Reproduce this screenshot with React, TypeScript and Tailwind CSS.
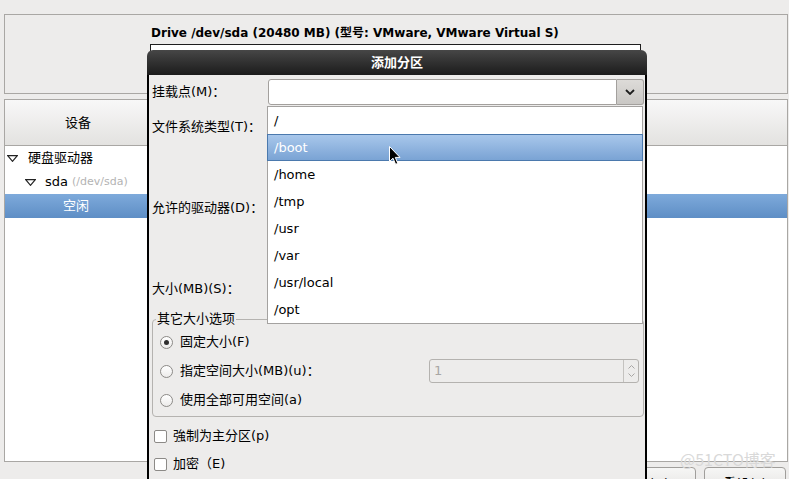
import React from "react";

function Tri() {
  return (
    <svg width="11" height="7" viewBox="0 0 11 7" className="shrink-0">
      <path d="M0.7 0.7 L10.3 0.7 L5.5 6.3 Z" fill="none" stroke="#222" strokeWidth="1.2" strokeLinejoin="miter" />
    </svg>
  );
}

function Radio({ checked }: { checked?: boolean }) {
  return (
    <div className="w-[13px] h-[13px] shrink-0 rounded-full border border-[#8c8a87] bg-gradient-to-b from-[#ffffff] to-[#ecebea] flex items-center justify-center">
      {checked ? <div className="w-[5px] h-[5px] rounded-full bg-[#2e2e2e]" /> : null}
    </div>
  );
}

function Check() {
  return <div className="w-[13px] h-[13px] shrink-0 rounded-[2px] border border-[#8c8a87] bg-white" />;
}

export default function App() {
  const items = ["/", "/boot", "/home", "/tmp", "/usr", "/var", "/usr/local", "/opt"];
  return (
    <div className="relative w-[789px] h-[479px] overflow-hidden bg-[#edeceb] text-[13px] leading-[16px] text-black font-['DejaVu_Sans','Noto_Sans_CJK_SC',sans-serif]">
      <div className="flex flex-col pt-[14px] pl-[4px] pr-[1px]">
        {/* top drive panel */}
        <div className="h-[80px] border border-[#a9a7a4] pl-[145px] pt-[10px] overflow-hidden">
          <div className="font-bold text-[12px] leading-[16px] whitespace-nowrap pl-[1px]">
            Drive /dev/sda (20480 MB) (型号: VMware, VMware Virtual S)
          </div>
          <div className="mt-[3px] w-[491px] h-[40px] bg-white border border-[#1e1e1e]" />
        </div>

        {/* device tree panel */}
        <div className="mt-[5px] h-[363px] border border-[#a9a7a4] bg-white flex flex-col">
          <div className="h-[46px] shrink-0 border-b border-[#a9a7a4] bg-gradient-to-b from-[#f8f8f8] to-[#e3e2e0] flex">
            <div className="w-[146px] flex items-center justify-center">设备</div>
          </div>
          <div className="h-[24px] flex items-center pl-[2px]">
            <Tri />
            <span className="ml-[10px]">硬盘驱动器</span>
          </div>
          <div className="h-[24px] flex items-center pl-[20px]">
            <Tri />
            <span className="ml-[9px]">sda</span>
            <span className="ml-[4px] text-[11px] text-[#b3b3b3]">(/dev/sda)</span>
          </div>
          <div className="h-[24px] flex items-center pl-[58px] text-white bg-gradient-to-b from-[#7eaadb] to-[#5e8ec5]">
            空闲
          </div>
        </div>

        {/* bottom buttons */}
        <div className="mt-[5px] flex justify-end gap-[8px] pr-[2px]">
          <div className="w-[110px] h-[30px] rounded-[4px] border border-[#a09e9b] bg-gradient-to-b from-[#f6f6f5] to-[#e2e0de] flex justify-center pt-[8px] pl-[10px]">
            删除(D)
          </div>
          <div className="w-[82px] h-[30px] rounded-[4px] border border-[#a09e9b] bg-gradient-to-b from-[#f6f6f5] to-[#e2e0de] flex justify-center pt-[8px]">
            重设(s)
          </div>
        </div>
      </div>

      {/* watermark */}
      <div className="absolute left-[680px] top-[449px] text-[16px] leading-[20px] text-[#d9d9d9] font-['Noto_Sans_CJK_SC',sans-serif]">
        @51CTO博客
      </div>

      {/* dialog */}
      <div className="absolute left-[147px] top-[50px] w-[500px] h-[440px] flex flex-col rounded-t-[6px] overflow-hidden">
        <div className="h-[25px] shrink-0 bg-gradient-to-b from-[#474747] to-[#1c1c1c] text-white font-bold flex items-center justify-center">
          添加分区
        </div>
        <div className="flex-1 bg-[#edeceb] border-x-2 border-black pl-[3px] pr-[1px] flex flex-col">
          <div className="mt-[4px] h-[26px] flex">
            <div className="w-[116px] flex items-center">挂载点(M)：</div>
            <div className="flex-1 flex">
              <div className="flex-1 bg-white border border-[#a3a09d] rounded-l-[3px]" />
              <div className="w-[27px] border border-l-0 border-[#a3a09d] rounded-r-[3px] bg-gradient-to-b from-[#dddbd8] to-[#c9c7c4] flex items-center justify-center">
                <svg width="10" height="6" viewBox="0 0 10 6">
                  <polyline points="1,1 5,5 9,1" fill="none" stroke="#1e1e1e" strokeWidth="1.8" />
                </svg>
              </div>
            </div>
          </div>
          <div className="mt-[9px] h-[26px] flex items-center">文件系统类型(T)：</div>
          <div className="mt-[6px] h-[124px] flex items-center">允许的驱动器(D)：</div>
          <div className="mt-[6px] h-[26px] flex items-center">大小(MB)(S)：</div>

          <fieldset className="mt-[9px] border border-[#b5b3b0] rounded-[4px] pt-[1px] pb-[2px]">
            <legend className="ml-[3px] px-[1px] leading-[16px]">其它大小选项</legend>
            <div className="h-[28px] flex items-center pl-[7px] gap-[7px]">
              <Radio checked />
              <span>固定大小(F)</span>
            </div>
            <div className="h-[30px] flex items-center pl-[7px] gap-[7px]">
              <Radio />
              <span>指定空间大小(MB)(u)：</span>
              <div className="ml-auto mr-[4px] w-[210px] h-[24px] rounded-[3px] border border-[#b4b2af] bg-[#edeceb] flex">
                <div className="flex-1 flex items-center pl-[4px] text-[#a8a6a4]">1</div>
                <div className="w-[15px] border-l border-[#c4c2bf] flex flex-col items-center justify-center gap-[4px]">
                  <svg width="7" height="4" viewBox="0 0 7 4">
                    <polyline points="0.5,3.5 3.5,0.5 6.5,3.5" fill="none" stroke="#a8a6a4" strokeWidth="1" />
                  </svg>
                  <svg width="7" height="4" viewBox="0 0 7 4">
                    <polyline points="0.5,0.5 3.5,3.5 6.5,0.5" fill="none" stroke="#a8a6a4" strokeWidth="1" />
                  </svg>
                </div>
              </div>
            </div>
            <div className="h-[28px] flex items-center pl-[7px] gap-[7px]">
              <Radio />
              <span>使用全部可用空间(a)</span>
            </div>
          </fieldset>

          <div className="mt-[7px] h-[24px] flex items-center pl-[2px] gap-[6px]">
            <Check />
            <span>強制为主分区(p)</span>
          </div>
          <div className="mt-[4px] h-[24px] flex items-center pl-[2px] gap-[6px]">
            <Check />
            <span>加密（E)</span>
          </div>
        </div>
      </div>

      {/* dropdown list */}
      <div className="absolute left-[267px] top-[106px] w-[376px] bg-white border border-[#a4a2a0] flex flex-col">
        {items.map((it, i) =>
          i === 1 ? (
            <div
              key={it}
              className="h-[27px] -mx-[1px] flex items-center pl-[6px] text-white border border-[#4b79ad] bg-gradient-to-b from-[#a8c7eb] to-[#7aa3d4]"
            >
              {it}
            </div>
          ) : (
            <div key={it} className="h-[27px] flex items-center pl-[6px]">
              {it}
            </div>
          )
        )}
      </div>

      {/* mouse cursor */}
      <svg className="absolute left-[389px] top-[146px]" width="13" height="20" viewBox="0 0 13 20">
        <path d="M0.5 0.5 L0.5 15.5 L4 12.2 L6.6 18.3 L8.8 17.4 L6.3 11.4 L11 11.4 Z" fill="#000" stroke="#fff" strokeWidth="1" />
      </svg>
    </div>
  );
}
